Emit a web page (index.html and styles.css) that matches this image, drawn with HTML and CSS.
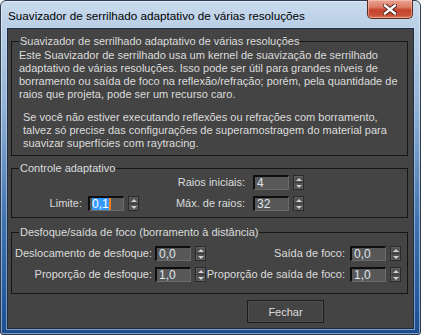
FILE: index.html
```html
<!DOCTYPE html>
<html lang="pt">
<head>
	<meta charset="utf-8">
	<title>Suavizador de serrilhado adaptativo</title>
	<link rel="stylesheet" href="styles.css">
</head>
<body>
	<div class="window">
		<div class="titlebar">
			<span class="title">Suavizador de serrilhado adaptativo de várias resoluções</span>
			<button class="close" title="Fechar">
				<svg width="14" height="11" viewBox="0 0 14 11">
					<path d="M2 1.5 L12 9.5 M12 1.5 L2 9.5" stroke="#3b1612" stroke-width="4.2" stroke-linecap="square"/>
					<path d="M2 1.5 L12 9.5 M12 1.5 L2 9.5" stroke="#ffffff" stroke-width="2.4" stroke-linecap="square"/>
				</svg>
			</button>
		</div>
		<div class="client">
			<fieldset class="group info">
				<legend>Suavizador de serrilhado adaptativo de várias resoluções</legend>
				<p>Este Suavizador de serrilhado usa um kernel de suavização de serrilhado<br>
				adaptativo de várias resoluções. Isso pode ser útil para grandes níveis de<br>
				borramento ou saída de foco na reflexão/refração; porém, pela quantidade de<br>
				raios que projeta, pode ser um recurso caro.</p>
				<p class="note">Se você não estiver executando reflexões ou refrações com borramento,<br>
				talvez só precise das configurações de superamostragem do material para<br>
				suavizar superfícies com raytracing.</p>
			</fieldset>

			<fieldset class="group adaptive">
				<legend>Controle adaptativo</legend>
				<div class="grid">
					<span></span><span></span>
					<label>Raios iniciais:</label>
					<div class="spin"><span class="num">4</span><span class="arrows"><i class="up"></i><i class="down"></i></span></div>

					<label>Limite:</label>
					<div class="spin"><span class="num"><span class="sel">0,1</span><span class="caret"></span></span><span class="arrows"><i class="up"></i><i class="down"></i></span></div>
					<label>Máx. de raios:</label>
					<div class="spin"><span class="num">32</span><span class="arrows"><i class="up"></i><i class="down"></i></span></div>
				</div>
			</fieldset>

			<fieldset class="group blur">
				<legend>Desfoque/saída de foco (borramento à distância)</legend>
				<div class="grid">
					<label>Deslocamento de desfoque:</label>
					<div class="spin"><span class="num">0,0</span><span class="arrows"><i class="up"></i><i class="down"></i></span></div>
					<label>Saída de foco:</label>
					<div class="spin"><span class="num">0,0</span><span class="arrows"><i class="up"></i><i class="down"></i></span></div>

					<label>Proporção de desfoque:</label>
					<div class="spin"><span class="num">1,0</span><span class="arrows"><i class="up"></i><i class="down"></i></span></div>
					<label>Proporção de saída de foco:</label>
					<div class="spin"><span class="num">1,0</span><span class="arrows"><i class="up"></i><i class="down"></i></span></div>
				</div>
			</fieldset>

			<div class="actions">
				<button class="btn">Fechar</button>
			</div>
		</div>
	</div>
</body>
</html>
```

FILE: styles.css
```css
html, body {
	margin: 0;
	background: #ffffff;
}
body {
	width: 421px;
	height: 335px;
	overflow: hidden;
	font-family: "Liberation Sans", Arial, sans-serif;
}
.window {
	box-sizing: border-box;
	width: 421px;
	height: 335px;
	border: 1px solid #2c3b4f;
	border-radius: 6px 6px 3px 3px;
	background: linear-gradient(#c9dbee 0, #b7cde4 30px, #8fb0d5 110px, #3f72ae 220px, #245a9c 300px, #1d4d8f 100%);
	box-shadow: inset 0 0 0 1px rgba(255,255,255,0.45);
}
.titlebar {
	display: flex;
	justify-content: space-between;
	align-items: flex-start;
	height: 27px;
	padding: 0 7px 0 7px;
}
.title {
	padding-top: 7px;
	font-family: "Liberation Sans", Arial, sans-serif;
	font-size: 11.7px;
	line-height: 16px;
	color: #000000;
}
.close {
	display: flex;
	align-items: center;
	justify-content: center;
	width: 46px;
	height: 19px;
	margin-top: -1px;
	padding: 0;
	border: 1px solid #5d2b24;
	border-top: none;
	border-radius: 0 0 5px 5px;
	background: linear-gradient(#eca493 0, #dc7a64 40%, #c4432c 55%, #c95036 85%, #e07c5e 100%);
	box-shadow: inset 0 0 0 1px rgba(255,220,210,0.45);
}
.client {
	box-sizing: border-box;
	height: 301px;
	margin: 0 6px;
	border: 1px solid #1d2c40;
	background: #444444;
	box-shadow: 0 0 0 1px rgba(200,220,245,0.55);
	color: #dcdcdc;
	font-size: 11px;
}
.group {
	box-sizing: border-box;
	width: 397px;
	min-width: 0;
	margin: 6px 0 0 3px;
	padding: 0;
	border: 1px solid #161616;
}
.group legend {
	margin-left: 7px;
	padding: 0 1px;
	line-height: 13px;
	color: #dcdcdc;
}
.info {
	padding: 1px 6px 5px 7px;
}
.info legend {
	margin-left: 0;
}
.info p {
	margin: 0;
	line-height: 13px;
	white-space: nowrap;
}
.info .note {
	margin-top: 10px;
	padding-left: 4px;
}
.adaptive {
	padding-bottom: 6px;
}
.blur {
	margin-top: 8px;
	padding: 7px 0 11px;
}
.grid {
	display: grid;
	row-gap: 6px;
	align-items: center;
	white-space: nowrap;
}
.adaptive .grid {
	grid-template-columns: 76px 51px 114px 51px;
}
.blur .grid {
	grid-template-columns: 143px 51px 144px 51px;
}
.grid label {
	text-align: right;
	line-height: 15px;
}
.adaptive label {
	padding-right: 6px;
}
.adaptive label:nth-of-type(odd) {
	padding-right: 8px;
}
.blur label:nth-of-type(odd) {
	padding-right: 3px;
}
.blur label:nth-of-type(even) {
	padding-right: 5px;
}
.spin {
	display: flex;
	gap: 4px;
	height: 15px;
}
.num {
	box-sizing: border-box;
	display: flex;
	align-items: center;
	width: 36px;
	height: 15px;
	padding-left: 2px;
	border-style: solid;
	border-width: 2px 1px 1px 2px;
	border-color: #0e0e0e #6a6a6a #6a6a6a #0e0e0e;
	background: #585858;
	color: #dfe6ee;
	font-size: 12px;
}
.sel {
	background: #3399ff;
	color: #ffffff;
	line-height: 12px;
}
.caret {
	width: 2px;
	height: 12px;
	background: #f08020;
}
.arrows {
	box-sizing: border-box;
	display: flex;
	flex-direction: column;
	width: 11px;
	height: 15px;
	border: 1px solid #2a2a2a;
	background: #505050;
	box-shadow: inset 0 0 0 1px #5e5e5e;
}
.arrows i {
	flex: 1;
	display: flex;
	align-items: center;
	justify-content: center;
}
.arrows i::before {
	content: "";
	border-left: 3px solid transparent;
	border-right: 3px solid transparent;
}
.arrows .up {
	border-bottom: 1px solid #3a3a3a;
}
.arrows .up::before {
	border-bottom: 3px solid #d0d0d0;
}
.arrows .down::before {
	border-top: 3px solid #d0d0d0;
}
.actions {
	display: flex;
	padding: 6px 0 0 239px;
}
.btn {
	width: 77px;
	height: 23px;
	padding: 0;
	border: 1px solid #1c1c1c;
	background: #444444;
	box-shadow: inset 0 0 0 1px #4e4e4e;
	color: #dcdcdc;
	font-family: "Liberation Sans", Arial, sans-serif;
	font-size: 11px;
}
```
